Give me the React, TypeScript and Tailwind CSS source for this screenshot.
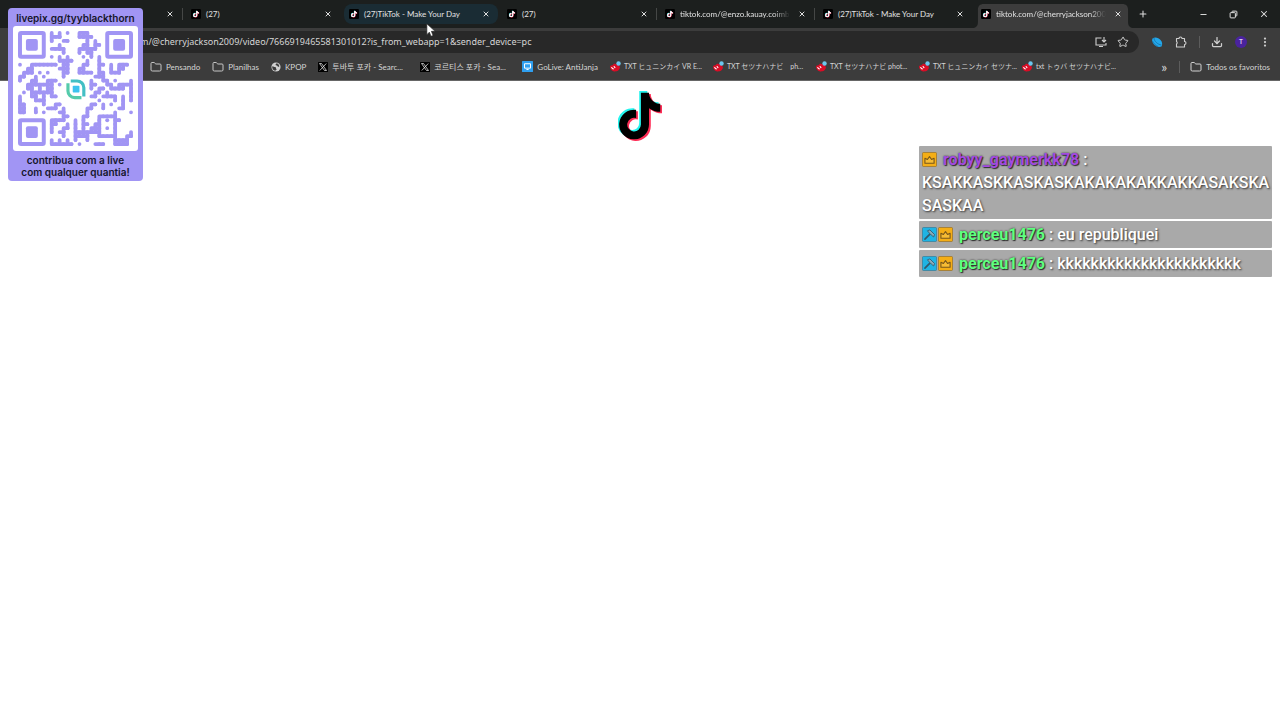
import React from 'react';
import { Download, Folder, Minus, MoreVertical, Plus, Star, X } from 'lucide-react';
import { FaTiktok } from 'react-icons/fa6';

const tabs = [
  { title: '', state: 'idle', divider: false },
  { title: '(27)', state: 'idle', divider: true },
  { title: '(27)TikTok - Make Your Day', state: 'hover', divider: false },
  { title: '(27)', state: 'idle', divider: false },
  { title: 'tiktok.com/@enzo.kauay.coimb', state: 'idle', divider: true },
  { title: '(27)TikTok - Make Your Day', state: 'idle', divider: true },
  { title: 'tiktok.com/@cherryjackson200', state: 'active', divider: false },
];

const bookmarks = [
  { label: 'Pensando', icon: 'folder' },
  { label: 'Planilhas', icon: 'folder' },
  { label: 'KPOP', icon: 'globe' },
  { label: '투바투 포카 - Searc...', icon: 'x' },
  { label: '코르티스 포카 - Sea...', icon: 'x' },
  { label: 'GoLive: AntiJanja', icon: 'live' },
  { label: 'TXT ヒュニンカイ VR E...', icon: 'red' },
  { label: 'TXT セツナハナビ　ph...', icon: 'red' },
  { label: 'TXT セツナハナビ phot...', icon: 'red' },
  { label: 'TXT ヒュニンカイ セツナ...', icon: 'red' },
  { label: 'txt トゥバ セツナハナビ...', icon: 'red' },
];

const messages = [
  { user: 'robyy_gaymerkk78', color: 'text-[#a44ae0]', mod: false, text: 'KSAKKASKKASKASKAKAKAKAKKAKKASAKSKASASKAA' },
  { user: 'perceu1476', color: 'text-[#5fff7f]', mod: true, text: 'eu republiquei' },
  { user: 'perceu1476', color: 'text-[#5fff7f]', mod: true, text: 'kkkkkkkkkkkkkkkkkkkkkk' },
];

// 29 x 29 modules; the finder corners and the middle logo are drawn apart
const qrRows = [
  '........#.#.#..###...........',
  '........###....####..........',
  '........#..##....#.#.........',
  '..........#.....##.##........',
  '........####...#####.........',
  '...........#...#.##..........',
  '........#.#.#...#.#.#........',
  '..........####...#..#........',
  '#..#######.##...##..##.#.###.',
  '..##......###..##...#..#.##..',
  '.###.#.#...##..####.##.###...',
  '##..#.#....#.......###.......',
  '#..##..###........#..##.#...#',
  '..#######.#.......##..##.####',
  '..##.#.##.........#.##.####.#',
  '.#.######..........##.#.....#',
  '#..##.#.##........##.####.#.#',
  '#...###.............#...#.#.#',
  '##....#..##.......##.#.#..#..',
  '##..#..###.#.....##..#...##..',
  '##..#.#...##.....#......#...#',
  '...........##...##..#####....',
  '........####..#.#...#...##...',
  '........##..#.#.##.##...#....',
  '........#..##.#.#.###.#.#....',
  '........#.##..#######...#...#',
  '...........#..####..#####..##',
  '........#.#.#.#..#......####.',
  '........######.#...###..####.',
];

function QrFinder({ x, y }: { x: number; y: number }) {
  return (
    <g>
      <rect x={x + 0.5} y={y + 0.5} width="6" height="6" rx="0.3" fill="none" stroke="#a195f4" />
      <rect x={x + 2} y={y + 2} width="3" height="3" rx="0.5" fill="#a195f4" />
    </g>
  );
}

function QrCode() {
  return (
    <svg viewBox="0 0 29 29" className="w-full" role="img">
      <g stroke="#a195f4" strokeWidth="0.95" strokeLinecap="round">
        {qrRows.map((row, y) =>
          row.split('').map((cell, x) => {
            if (cell !== '#') return null;
            const right = row[x + 1] === '#' ? 1 : 0;
            const down = qrRows[y + 1]?.[x] === '#' ? 1 : 0;
            return (
              <path
                key={`${x}-${y}`}
                d={`M${x + 0.5} ${y + 0.5}h${right || 0.01}M${x + 0.5} ${y + 0.5}v${down || 0.01}`} />
            );
          })
        )}
      </g>
      <circle cx="22.5" cy="22.5" r="0.5" fill="#a195f4" />
      <QrFinder x={0} y={0} />
      <QrFinder x={22} y={0} />
      <QrFinder x={0} y={22} />
      <g fill="none" strokeWidth="0.8">
        <path d="M13.3 12.6h1.6a1.7 1.7 0 0 1 1.7 1.7v2.2" stroke="#43bfc4" />
        <path d="M12.6 13.2v1.9a1.7 1.7 0 0 0 1.7 1.7h1.7" stroke="#55cbab" />
      </g>
      <rect x="13.8" y="13.8" width="1.7" height="1.7" rx="0.2" fill="#3dc3ef" />
    </svg>
  );
}

function TikTokLogo({ className }: { className: string }) {
  return (
    <svg viewBox="0 0 44 50" className={className} aria-hidden="true">
      <FaTiktok x="-3.5" y="0" size={47} color="#25f4ee" />
      <FaTiktok x="0" y="3" size={47} color="#fe2c55" />
      <FaTiktok x="-1.8" y="1.5" size={47} color="#000" />
    </svg>
  );
}

function TikTokFavicon() {
  return (
    <svg viewBox="0 0 24 24" className="size-[10px] shrink-0" aria-hidden="true">
      <rect width="24" height="24" rx="3" fill="#000" />
      <FaTiktok x="3.4" y="3.4" size={16} color="#25f4ee" />
      <FaTiktok x="4.8" y="4.8" size={16} color="#fe2c55" />
      <FaTiktok x="4" y="4" size={16} color="#fff" />
    </svg>
  );
}

function BookmarkIcon({ name }: { name: string }) {
  if (name === 'folder') return <Folder className="size-3 shrink-0 text-[#c7c7c7]" strokeWidth={2} />;
  if (name === 'globe') {
    return (
      <svg viewBox="0 0 24 24" className="size-[10px] shrink-0">
        <circle cx="12" cy="12" r="11" fill="#d0d0d0" />
        <path d="M3 10c4 0 4 2 7 2s1 4 3 5-1 3-3 4C5 20 2 15 3 10zM13 3c0 3-3 2-2 4s4 0 5 3 3 1 4 0c-1-4-4-7-7-7z" fill="#3c3c3c" />
      </svg>
    );
  }
  if (name === 'x') {
    return (
      <svg viewBox="0 0 20 20" className="size-[10px] shrink-0">
        <rect width="20" height="20" rx="1" fill="#000" />
        <path d="M3 3h4l10 14h-4zM16.5 3 3.5 17" fill="none" stroke="#e8e8e8" strokeWidth="1.5" />
      </svg>
    );
  }
  if (name === 'live') {
    return (
      <svg viewBox="0 0 20 20" className="size-[11px] shrink-0">
        <rect width="20" height="20" rx="1" fill="#2f9ff0" />
        <path d="M4.5 5h11v8h-11zM8 15.5h4" fill="none" stroke="#fff" strokeWidth="1.8" />
      </svg>
    );
  }
  return (
    <svg viewBox="0 0 20 20" className="size-[11px] shrink-0">
      <path d="M0 9c3-1 5-1 7-4 3-1 10 2 11 6 0 6-5 8-9 8-5 0-9-4-9-10z" fill="#d90d26" />
      <path d="m3 12 3 2.5M7.5 10l1.5 2" stroke="#fff" strokeWidth="2" strokeLinecap="round" />
      <circle cx="15.5" cy="4.5" r="4" fill="#6cc7ee" />
    </svg>
  );
}

function CrownBadge() {
  return (
    <svg viewBox="0 0 18 18" className="inline-block size-[15px] align-[-2px]">
      <rect x=".5" y=".5" width="17" height="17" rx="1.5" fill="#f4ae16" stroke="#9b752b" />
      <path d="M3.5 7.5 6.5 9 9 5.5 11.5 9l3-1.5v6h-11z" fill="#f6bc35" stroke="#75551b" strokeWidth="1.3" strokeLinejoin="round" />
    </svg>
  );
}

function ModBadge() {
  return (
    <svg viewBox="0 0 18 18" className="mr-px inline-block size-[15px] align-[-2px]">
      <rect x=".5" y=".5" width="17" height="17" rx="1.5" fill="#1fb4e4" stroke="#397f9b" />
      <path d="m3.5 14.5 6-6" stroke="#31596b" strokeWidth="2" strokeLinecap="round" />
      <path d="m6.5 4.5 3-1 5.5 5.5-1 3-3-2.5-2-2z" fill="#8babb7" stroke="#31596b" strokeLinejoin="round" />
    </svg>
  );
}

function TabStrip() {
  return (
    <div className="flex h-7 items-stretch bg-[#1c1f1e] pl-6 font-[Lato,sans-serif]">
      {tabs.map((tab, i) => (
        <div key={i} className="relative flex w-[158px] min-w-0 shrink pt-1 pl-1">
          {tab.divider && <span className="absolute top-2 left-0 h-3 w-px bg-[#454746]" />}
          {tab.state === 'active' && (
            <svg viewBox="0 0 164 24" preserveAspectRatio="none" className="absolute top-1 left-0 h-6 w-[calc(100%+4px)]" aria-hidden="true">
              <path d="M0 24c4 0 6-2 6-6V6c0-4 2-6 6-6h140c4 0 6 2 6 6v12c0 4 2 6 6 6z" fill="#3c3c3c" />
            </svg>
          )}
          <div
            className={
              tab.state === 'hover'
                ? 'relative flex h-5 w-full items-center rounded-lg bg-[#1a2c34] pr-2 pl-[5px]'
                : 'relative flex h-5 w-full items-center pr-2 pl-[5px]'
            }>
            <TikTokFavicon />
            <span
              className={
                tab.title.length > 26
                  ? 'ml-[5px] flex-1 mask-r-from-85% text-[8px] whitespace-nowrap text-[#e2e2e2]'
                  : 'ml-[5px] flex-1 text-[8px] whitespace-nowrap text-[#e2e2e2]'
              }>
              {tab.title}
            </span>
            <button className="ml-2 text-[#dedede]" aria-label="Fechar">
              <X className="size-2" strokeWidth={3} />
            </button>
          </div>
        </div>
      ))}
      <button className="ml-2 text-[#dedede]" aria-label="Nova guia">
        <Plus className="size-[10px]" strokeWidth={2.5} />
      </button>
      <div className="ml-auto flex items-center gap-[21px] pr-[11px] text-[#e4e4e4]">
        <button aria-label="Minimizar">
          <Minus className="size-[9px]" strokeWidth={2.5} />
        </button>
        <button aria-label="Restaurar">
          <svg viewBox="0 0 12 12" className="size-[9px]" fill="none" stroke="currentColor" strokeWidth="1.3">
            <rect x="1.5" y="3.5" width="7" height="7" rx="1" />
            <path d="M4 3.5V2.5a1 1 0 0 1 1-1h4.5a1 1 0 0 1 1 1V7a1 1 0 0 1-1 1h-1" />
          </svg>
        </button>
        <button aria-label="Fechar janela">
          <X className="size-[10px]" strokeWidth={2.5} />
        </button>
      </div>
    </div>
  );
}

function AddressBar() {
  return (
    <div className="flex h-[22px] items-center pr-[9px] pl-[84px] text-[#cfcfcf]">
      <div className="flex h-full flex-1 items-center rounded-full bg-[#282828] pr-2.5 pl-5">
        <input
          aria-label="Endereço"
          className="min-w-0 flex-1 bg-transparent text-[9px] text-[#d6d6d6] outline-none"
          defaultValue="tiktok.com/@cherryjackson2009/video/7666919465581301012?is_from_webapp=1&sender_device=pc" />

        <button aria-label="Instalar">
          <svg viewBox="0 0 24 24" className="size-3" fill="none" stroke="currentColor" strokeWidth="2.2">
            <path d="M13 4H2v14h20v-4M8 21h8M18 2v9M14 8l4 4 4-4" />
          </svg>
        </button>
        <button className="ml-2.5" aria-label="Favoritar">
          <Star className="size-3" />
        </button>
      </div>
      <button className="ml-3 flex" aria-label="Extensão">
        <svg viewBox="0 0 24 24" className="size-3">
          <path d="M3 5c5-4 12-2 16 3 4 4 4 9 2 13-4 2-10 1-14-3S1 9 3 5z" fill="#23a7ea" />
          <path d="M6 4c0 6 7 13 15 14M3 10c2 5 6 9 11 11" fill="none" stroke="#176b9f" strokeWidth="1.5" />
        </svg>
      </button>
      <button className="ml-3" aria-label="Extensões">
        <svg viewBox="0 0 24 24" className="size-3" fill="none" stroke="currentColor" strokeWidth="2.2" strokeLinejoin="round">
          <path d="M3 5h5a3 3 0 0 1 6 0h5v6a3 3 0 0 1 0 6v5H3v-6a3 3 0 0 0 0-5z" />
        </svg>
      </button>
      <span className="ml-3 h-3 w-px bg-[#5c5c5c]" />
      <button className="ml-[11px] flex" aria-label="Downloads">
        <Download className="size-3" strokeWidth={2.5} />
      </button>
      <button className="ml-3 flex size-3 items-center justify-center rounded-full bg-[#4a239e] text-[7px] text-white">T</button>
      <button className="ml-3" aria-label="Menu">
        <MoreVertical className="size-3" strokeWidth={2.5} />
      </button>
    </div>
  );
}

function BookmarksBar() {
  return (
    <nav className="flex h-[27px] items-center gap-3 pr-2.5 pl-[150px] font-[Lato,'Noto_Sans_CJK_KR','Noto_Sans_CJK_JP',sans-serif] text-[8px] whitespace-nowrap text-[#d4d4d4]">
      {bookmarks.map((b) => (
        <a
          key={b.label}
          href="#"
          className={
            b.icon === 'red'
              ? 'flex w-[91px] items-center gap-[3px] text-[7px]'
              : b.icon === 'x'
                ? 'flex w-[90px] items-center gap-1'
                : 'flex items-center gap-1'
          }>
          <BookmarkIcon name={b.icon} />
          {b.label}
        </a>
      ))}
      <button className="ml-auto text-sm leading-3" aria-label="Mais favoritos">»</button>
      <div className="flex items-center gap-2.5">
        <span className="h-3 w-px bg-[#5c5c5c]" />
        <a href="#" className="flex items-center gap-1">
          <Folder className="size-3" />
          Todos os favoritos
        </a>
      </div>
    </nav>
  );
}

function DonationCard() {
  return (
    <aside className="absolute top-2 left-2 w-[135px] rounded-[4px] bg-[#a195f4] px-1 pt-1 pb-[3px] text-center font-[Inter,sans-serif] text-[10px] leading-3 font-semibold whitespace-nowrap text-[#15152b]">
      <p className="flex justify-center">livepix.gg/tyyblackthorn</p>
      <div className="mx-px mt-0.5 mb-[3px] rounded-[3px] bg-white p-[5px]">
        <QrCode />
      </div>
      <p className="flex justify-center">contribua com a live</p>
      <p className="flex justify-center">com qualquer quantia!</p>
    </aside>
  );
}

function Chat() {
  return (
    <section className="absolute top-[146px] right-2 flex w-[353px] flex-col gap-0.5 font-[Roboto,sans-serif] text-base leading-[23px] font-medium">
      {messages.map((m, i) => (
        <p
          key={i}
          className="rounded-[1px] bg-[#a9a9a9] py-0.5 pr-px pl-[3px] break-words text-white [text-shadow:1px_1px_2px_#333]">
          {m.mod && <ModBadge />}
          <CrownBadge />
          <span className={`ml-1.5 font-bold [text-shadow:0_0_2px_#222,1px_1px_1px_#333] ${m.color}`}>{m.user}</span>
          {' : '}
          {m.text}
        </p>
      ))}
    </section>
  );
}

export default function App() {
  return (
    <div className="relative min-h-screen overflow-hidden bg-white font-['Noto_Sans','Noto_Sans_CJK_KR','Noto_Sans_CJK_JP',sans-serif]">
      <header className="border-b border-[#666] bg-[#3c3c3c]">
        <TabStrip />
        <div className="pt-[3px]">
          <AddressBar />
          <BookmarksBar />
        </div>
      </header>
      <main className="flex justify-center pt-2.5">
        <TikTokLogo className="h-[50px] w-11" />
      </main>
      <Chat />
      <DonationCard />
      <svg viewBox="0 0 12 18" className="absolute top-[23px] left-[426px] h-[15px] w-[10px]" aria-hidden="true">
        <path d="M1 1v13l3-3 2 5 2.5-1-2-5H11z" fill="#fff" stroke="#222" strokeWidth=".8" />
      </svg>
    </div>
  );
}
